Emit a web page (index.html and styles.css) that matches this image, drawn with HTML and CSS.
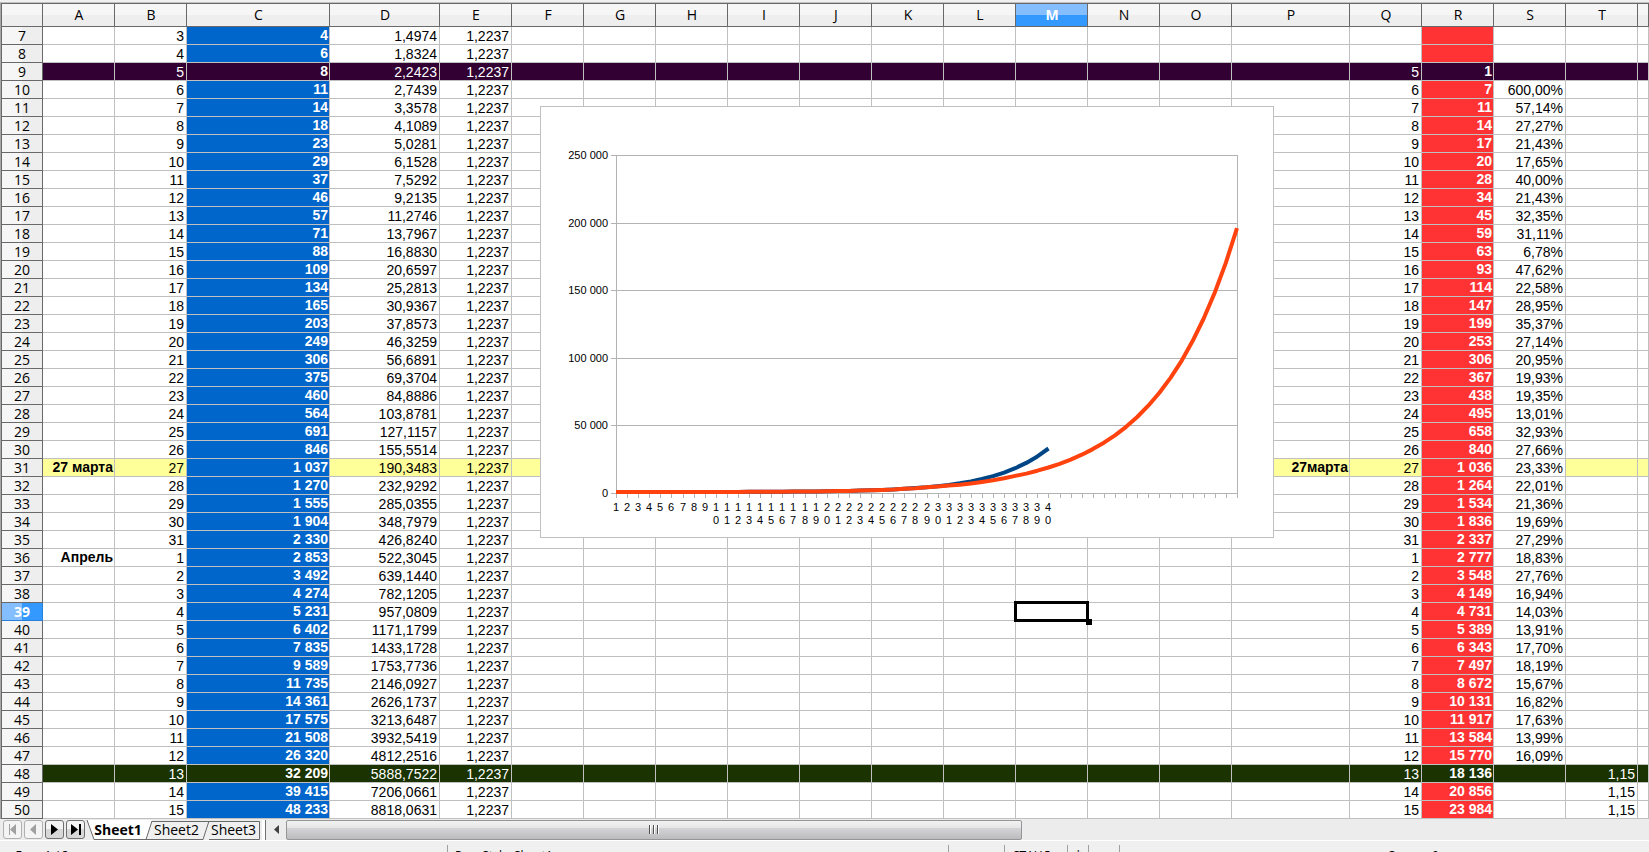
FILE: index.html
```
<!DOCTYPE html>
<html lang="ru">
<head>
<meta charset="utf-8">
<title>Sheet1</title>
<link rel="stylesheet" href="styles.css">
</head>
<body>
<div class="app">
  <main class="sheet">
    <table class="grid">
      <colgroup id="cols"></colgroup>
      <thead><tr id="heads"></tr></thead>
      <tbody id="rows"></tbody>
    </table>
    <svg class="chart" id="chart" viewBox="0 0 734 432" role="img" aria-label="График"></svg>
  </main>
  <div class="bottombar">
    <div class="nav">
      <button class="navbtn off" aria-label="Первый лист"><svg viewBox="0 0 17 17"><path d="M5 3h1v11H5zM12 3v11L6 8.500z"/></svg></button>
      <button class="navbtn off" aria-label="Предыдущий лист"><svg viewBox="0 0 17 17"><path d="M11 3v11L5 8.500z"/></svg></button>
      <button class="navbtn" aria-label="Следующий лист"><svg viewBox="0 0 17 17"><path d="M5 3v11l7-5.500z"/></svg></button>
      <button class="navbtn" aria-label="Последний лист"><svg viewBox="0 0 17 17"><path d="M4 3v11l7-5.500zM12 3h2v11h-2z"/></svg></button>
    </div>
    <div class="tabs">
      <svg class="tabshape" viewBox="0 0 176 21" aria-hidden="true">
        <path class="tab-idle" d="M67 1H174.500V19.500H61Z"/>
        <path class="tab-on" d="M2 0L9 19.500H61L67 0Z"/>
        <path class="tab-line" d="M2 0L9 19.500H61L67 1M118 19.500L124 1M67 1.500H174.500V19.500H124M61 19.500H118"/>
      </svg>
      <button class="tab current">Sheet1</button>
      <button class="tab">Sheet2</button>
      <button class="tab">Sheet3</button>
    </div>
    <div class="splitter"></div>
    <button class="arrow" aria-label="Прокрутить влево"><svg viewBox="0 0 5 9"><path d="M5 0v9L0 4.500z"/></svg></button>
    <div class="track"><div class="thumb"><i></i><i></i><i></i></div></div>
  </div>
  <footer class="status">
    <span class="st st-sheet">Лист 1 / 3</span>
    <span class="st st-style">PageStyle_Sheet1</span>
    <span class="st st-blank"></span>
    <span class="st st-mode">СТАНД</span>
    <span class="st st-mod">*</span>
    <span class="st st-sign"></span>
    <span class="st st-sum">Сумма=0</span>
  </footer>
</div>
<script src="sheet.js"></script>
</body>
</html>
```

FILE: styles.css
```
html, body {
  margin: 0;
  height: 100%;
  overflow: hidden;
}

body {
  background: #f0f0f0;
  font-family: "Liberation Sans", Arial, sans-serif;
  font-size: 14px;
  color: #000;
}

button {
  margin: 0;
  padding: 0;
  border: 0;
  background: none;
  font: inherit;
  color: inherit;
}

.app {
  display: flex;
  flex-direction: column;
  height: 100vh;
  overflow: hidden;
  border-top: 2px solid #f0f0f0;
  box-sizing: border-box;
}

.sheet {
  position: relative;
  flex: none;
  border-top: 1px solid #c0c0c0;
  border-left: 1px solid #a8a8a8;
}

.grid {
  width: 100%;
  table-layout: fixed;
  border-collapse: separate;
  border-spacing: 0;
  border-top: 1px solid #696969;
  border-left: 1px solid #696969;
  background: #fff;
}

.w-head { width: 41px; }
.w-std { width: 72px; }
.w-c { width: 143px; }
.w-d { width: 110px; }
.w-p { width: 118px; }

.grid th,
.grid td {
  box-sizing: border-box;
  padding: 0;
  overflow: hidden;
  white-space: nowrap;
}

.grid th {
  border-right: 1px solid #696969;
  border-bottom: 1px solid #696969;
  font-family: "Open Sans", "Noto Sans", sans-serif;
  font-weight: 400;
  text-align: center;
}

.grid thead th {
  height: 23px;
  padding-left: 1px;
  line-height: 22px;
  background: linear-gradient(#f6f6f6 50%, #eeeeee 50%);
}

.grid tbody th {
  height: 18px;
  line-height: 17px;
  background: linear-gradient(90deg, #f6f6f6 50%, #eeeeee 50%);
}

.grid thead th.active {
  background: linear-gradient(#85beff 50%, #3399ff 50%);
  color: #fff;
  font-weight: 700;
}

.grid tbody th.active {
  border-color: #2a80d8;
  background: linear-gradient(90deg, #85beff 50%, #3399ff 50%);
  color: #fff;
  font-weight: 700;
}

.grid td {
  height: 18px;
  padding: 1px 2px 0 0;
  border-right: 1px solid #c0c0c0;
  border-bottom: 1px solid #c0c0c0;
  line-height: 16px;
  text-align: right;
}

.grid td.strong {
  padding: 0 1px 1px 0;
  font-weight: 700;
}

.grid td.blue { background: #0066cc; color: #fff; }
.grid td.red { background: #ff3333; color: #fff; }
.marked td { background: #ffff99; }
.marked td.plain { background: #fff; }
.plum td, .grid .plum td.blue, .grid .plum td.red { background: #330033; color: #fff; }
.moss td, .grid .moss td.blue, .grid .moss td.red { background: #1a3300; color: #fff; }

.grid td.cursor {
  position: relative;
  overflow: visible;
}

.cursor::before {
  content: "";
  position: absolute;
  inset: -2px;
  border: 3px solid #000;
}

.cursor::after {
  content: "";
  position: absolute;
  right: -5px;
  bottom: -5px;
  width: 6px;
  height: 6px;
  background: #000;
}

.chart {
  position: absolute;
  left: 539px;
  top: 103px;
  width: 734px;
  height: 432px;
  font-size: 11px;
}

.chart .frame { fill: #fff; stroke: #c0c0c0; }
.chart .rule { stroke: #b3b3b3; fill: none; }
.chart .series { fill: none; stroke-width: 4; stroke-linejoin: round; }
.chart .s-blue { stroke: #004586; }
.chart .s-red { stroke: #ff420e; }
.chart .val { text-anchor: end; }
.chart .cat { text-anchor: middle; }

.bottombar {
  display: flex;
  flex: none;
  align-items: center;
  height: 22px;
  box-sizing: border-box;
  padding-left: 3px;
  border-bottom: 1px solid #fff;
  background: #ececec;
}

.nav {
  display: flex;
  gap: 2px;
}

.navbtn {
  width: 19px;
  height: 19px;
  border: 1px solid #707070;
  border-radius: 3px;
  background: linear-gradient(#f4f4f4 50%, #d8d8d8 50%);
}

.navbtn svg {
  display: block;
  width: 17px;
  height: 17px;
}

.navbtn.off {
  border-color: #b0b0b0;
  background: #f4f4f4;
  fill: #a0a0a0;
}

.tabs {
  position: relative;
  display: flex;
  gap: 12px;
  box-sizing: border-box;
  width: 177px;
  padding-left: 9px;
  font-family: "Open Sans", "Noto Sans", sans-serif;
  line-height: 20px;
}

.tabshape {
  position: absolute;
  left: 0;
  top: 0;
  width: 176px;
  height: 21px;
}

.tab-on { fill: #fff; }
.tab-idle { fill: #f0f0f0; }
.tab-line { fill: none; stroke: #696969; }

.tab {
  position: relative;
  flex: none;
  width: 45px;
  text-align: center;
}

.tab.current { font-weight: 700; width: 48px; }

.splitter {
  width: 3px;
  height: 20px;
  border-right: 1px solid #707070;
  background: #fff;
}

.arrow {
  width: 20px;
  height: 20px;
  flex: none;
}

.arrow svg {
  display: block;
  width: 5px;
  height: 9px;
  margin: 0 auto;
  fill: #404040;
}

.track {
  flex: 1;
  background: #ececec;
}

.thumb {
  display: flex;
  align-items: center;
  justify-content: center;
  gap: 2px;
  box-sizing: border-box;
  width: 54%;
  height: 20px;
  border: 1px solid #959595;
  border-radius: 2px;
  background: linear-gradient(#f2f2f2, #e6e6e6 38%, #d4d4d6 40%, #bcbcc0);
}

.thumb i {
  width: 2px;
  height: 9px;
  border-right: 1px solid #fff;
  box-sizing: border-box;
  border-left: 1px solid #505050;
}

.status {
  display: flex;
  flex: none;
  padding-top: 4px;
  background: #f0f0f0;
  font-family: "Open Sans", "Noto Sans", sans-serif;
  font-size: 12px;
  line-height: 17px;
}

.st {
  box-sizing: border-box;
  height: 22px;
  padding: 2px 7px 0;
  border-right: 1px solid #a0a0a0;
  white-space: nowrap;
}

.st-sheet { width: 448px; padding-left: 14px; }
.st-style { width: 501px; }
.st-blank { width: 56px; }
.st-mode { width: 63px; }
.st-mod { width: 21px; }
.st-sign { width: 31px; }
.st-sum { flex: 1; padding-left: 64px; border: 0; text-align: center; }
```

FILE: sheet.js
```
const letters = "ABCDEFGHIJKLMNOPQRSTU".split("");
const widths = { C: "w-c", D: "w-d", P: "w-p" };
const firstRow = 7;

const colC = "4|6|8|11|14|18|23|29|37|46|57|71|88|109|134|165|203|249|306|375|460|564|691|846|1 037|1 270|1 555|1 904|2 330|2 853|3 492|4 274|5 231|6 402|7 835|9 589|11 735|14 361|17 575|21 508|26 320|32 209|39 415|48 233".split("|");
const colD = "1,4974|1,8324|2,2423|2,7439|3,3578|4,1089|5,0281|6,1528|7,5292|9,2135|11,2746|13,7967|16,8830|20,6597|25,2813|30,9367|37,8573|46,3259|56,6891|69,3704|84,8886|103,8781|127,1157|155,5514|190,3483|232,9292|285,0355|348,7979|426,8240|522,3045|639,1440|782,1205|957,0809|1171,1799|1433,1728|1753,7736|2146,0927|2626,1737|3213,6487|3932,5419|4812,2516|5888,7522|7206,0661|8818,0631".split("|");
const colR = "||1|7|11|14|17|20|28|34|45|59|63|93|114|147|199|253|306|367|438|495|658|840|1 036|1 264|1 534|1 836|2 337|2 777|3 548|4 149|4 731|5 389|6 343|7 497|8 672|10 131|11 917|13 584|15 770|18 136|20 856|23 984".split("|");
const colS = "|||600,00%|57,14%|27,27%|21,43%|17,65%|40,00%|21,43%|32,35%|31,11%|6,78%|47,62%|22,58%|28,95%|35,37%|27,14%|20,95%|19,93%|19,35%|13,01%|32,93%|27,66%|23,33%|22,01%|21,36%|19,69%|27,29%|18,83%|27,76%|16,94%|14,03%|13,91%|17,70%|18,19%|15,67%|16,82%|17,63%|13,99%|16,09%|||".split("|");
const rowClass = { 9: "plum", 31: "marked", 48: "moss" };

function cell(letter, row) {
  const i = row - firstRow;
  const day = row < 36 ? row - 4 : row - 35;
  let text = "";
  const cls = [];
  if (letter === "A") { text = { 31: "27 марта", 36: "Апрель" }[row] || ""; cls.push("strong"); }
  if (letter === "B") text = day;
  if (letter === "C") { text = colC[i]; cls.push("strong", "blue"); }
  if (letter === "D") text = colD[i];
  if (letter === "E") text = "1,2237";
  if (letter === "P") { text = row === 31 ? "27марта" : ""; cls.push("strong"); }
  if (letter === "Q" && row > 8) text = day;
  if (letter === "R") { text = colR[i]; cls.push("strong", "red"); }
  if (letter === "S") { text = colS[i]; cls.push("plain"); }
  if (letter === "T" && row > 47) text = "1,15";
  if (letter === "M" && row === 39) cls.push("cursor");
  return `<td class="${cls.join(" ")}">${text}</td>`;
}

document.getElementById("cols").innerHTML = '<col class="w-head">' +
  letters.map(l => l === "U" ? "<col>" : `<col class="${widths[l] || "w-std"}">`).join("");

document.getElementById("heads").innerHTML = "<th></th>" +
  letters.map(l => `<th scope="col"${l === "M" ? ' class="active"' : ""}>${l === "U" ? "" : l}</th>`).join("");

document.getElementById("rows").innerHTML = colC.map((_, i) => {
  const row = i + firstRow;
  return `<tr class="${rowClass[row] || ""}"><th scope="row"${row === 39 ? ' class="active"' : ""}>${row}</th>` +
    letters.map(l => cell(l, row)).join("") + "</tr>";
}).join("");

/* Chart: both series start at row 9; the second one goes on growing by 15% a day. */
const plot = { left: 76, right: 697, top: 49, bottom: 387, points: 57, max: 250000 };
const num = s => Number(s.replace(/ /g, ""));
const px = i => plot.left + i * (plot.right - plot.left) / (plot.points - 1);
const py = v => plot.bottom - 1 - v * (plot.bottom - plot.top) / plot.max;
const path = values => "M" + values.map((v, i) => px(i).toFixed(1) + " " + py(v).toFixed(1)).join("L");

const blue = colC.slice(2, 42).map(num);
const red = colR.slice(2).map(num);
while (red.length < plot.points) red.push(red[red.length - 1] * 1.15);

let svg = '<rect class="frame" x="0.5" y="0.5" width="733" height="431"/>';
for (let k = 0; k <= 5; k++) {
  const y = Math.round(plot.bottom - k * (plot.bottom - plot.top) / 5) + 0.5;
  svg += `<path class="rule" d="M${plot.left - 5} ${y}H${plot.right}"/>`;
  svg += `<text class="val" x="68" y="${y + 3.5}">${k ? k * 50 + " 000" : "0"}</text>`;
}
svg += `<path class="rule" d="M${plot.left + 0.5} ${plot.top}V${plot.bottom + 5}M${plot.right + 0.5} ${plot.top}V${plot.bottom + 5}"/>`;
for (let i = 1; i < plot.points - 1; i++) {
  svg += `<path class="rule" d="M${Math.round(px(i)) + 0.5} ${plot.bottom}v5"/>`;
}
for (let i = 0; i < 40; i++) {
  String(i + 1).split("").forEach((digit, line) => {
    svg += `<text class="cat" x="${Math.round(px(i))}" y="${405 + line * 13}">${digit}</text>`;
  });
}
svg += `<path class="series s-blue" d="${path(blue)}"/><path class="series s-red" d="${path(red)}"/>`;
document.getElementById("chart").innerHTML = svg;
```
